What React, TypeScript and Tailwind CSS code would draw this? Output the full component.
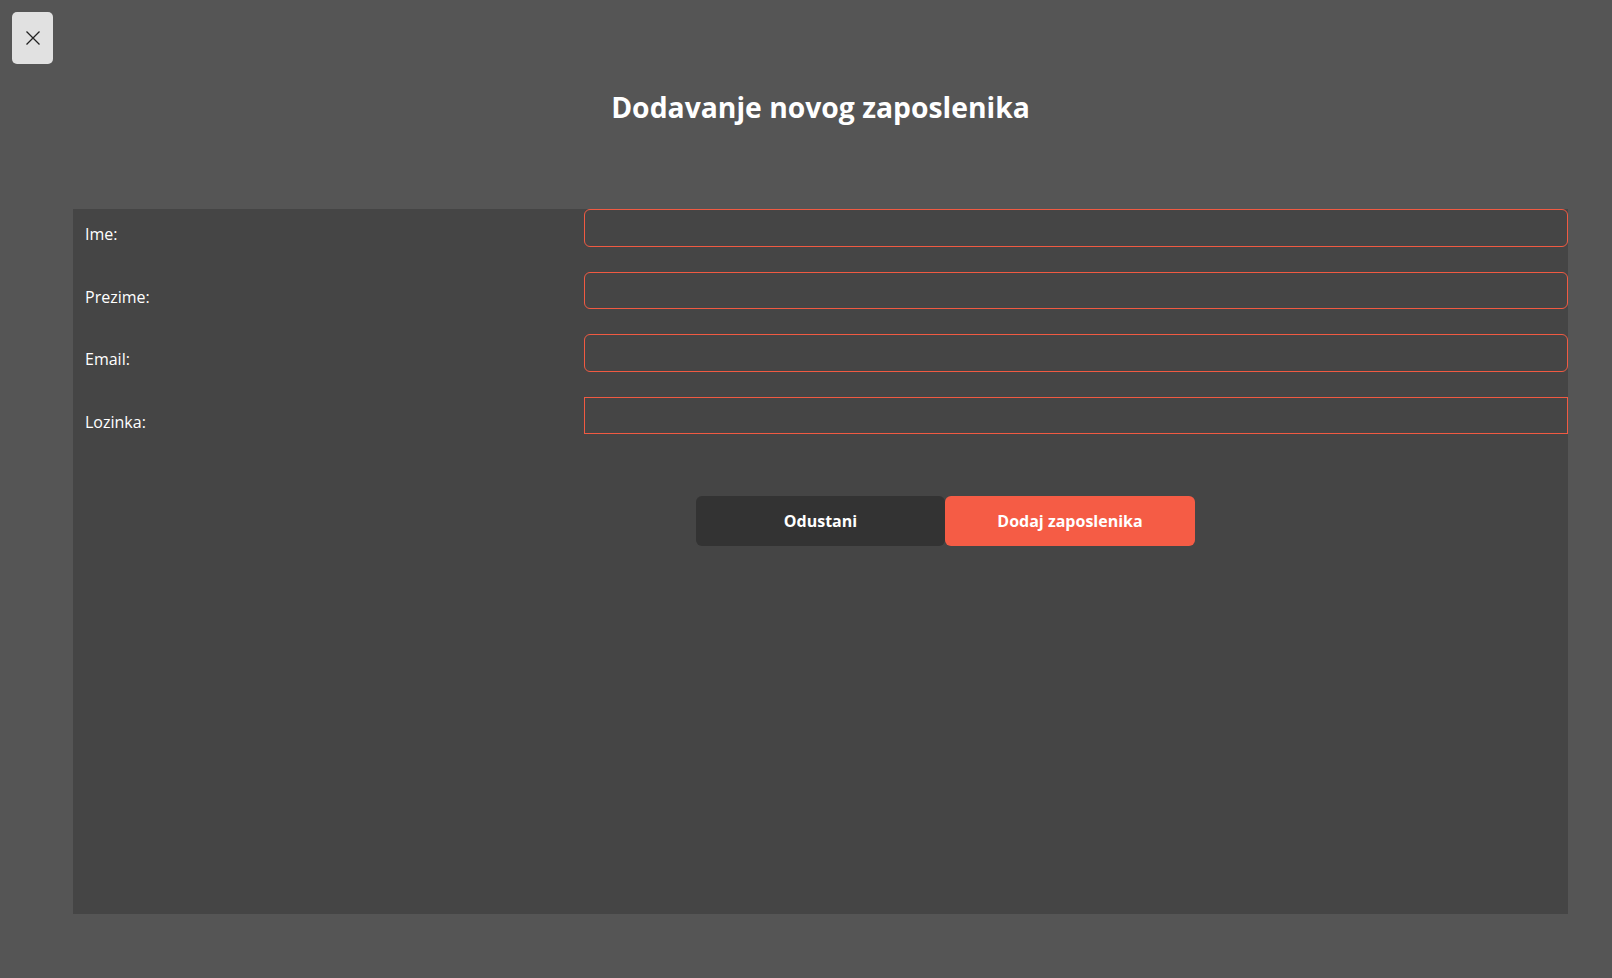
import React from "react";

const fields = [
  { label: "Ime:", rounded: true, type: "text" },
  { label: "Prezime:", rounded: true, type: "text" },
  { label: "Email:", rounded: true, type: "email" },
  { label: "Lozinka:", rounded: false, type: "password" },
];

export default function App() {
  return (
    <div
      className="w-[1612px] h-[978px] bg-[#555555] flex flex-col overflow-hidden"
      style={{ fontFamily: '"Open Sans", "Noto Sans", sans-serif' }}
    >
      <div className="relative h-[209px]">
        <button className="absolute left-[12px] top-[12px] w-[41px] h-[52px] rounded-[5px] bg-[#e1e1e1] flex items-center justify-center">
          <svg width="16" height="16" viewBox="0 0 16 16">
            <path d="M1.5 1.5 L14.5 14.5 M14.5 1.5 L1.5 14.5" stroke="#222" strokeWidth="1.3" />
          </svg>
        </button>
        <h1 className="absolute left-[73px] w-[1495px] top-[87px] text-center text-white font-bold text-[28.3px] leading-[40px]">
          Dodavanje novog zaposlenika
        </h1>
      </div>
      <div className="ml-[73px] w-[1495px] h-[705px] bg-[#454545]">
        <div className="flex flex-col gap-[25px]">
          {fields.map((f) => (
            <div key={f.label} className="flex">
              <label className="w-[511px] pl-[12px] pt-[14px] text-white text-[16px] leading-[22px]">
                {f.label}
              </label>
              <input
                type={f.type}
                className={`flex-1 h-[37.5px] bg-transparent border border-[#f05a42] outline-none px-2 text-white ${
                  f.rounded ? "rounded-[6px]" : ""
                }`}
              />
            </div>
          ))}
        </div>
        <div className="flex mt-[62px] ml-[623px]">
          <button className="w-[249px] h-[50px] bg-[#333333] rounded-[6px] text-white font-bold text-[16px]">
            Odustani
          </button>
          <button className="w-[250px] h-[50px] bg-[#f55c45] rounded-[6px] text-white font-bold text-[16px]">
            Dodaj zaposlenika
          </button>
        </div>
      </div>
    </div>
  );
}
